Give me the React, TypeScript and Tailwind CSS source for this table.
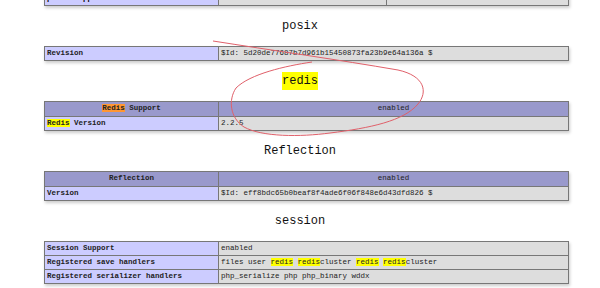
import React from "react";

const mono = "font-['Liberation_Mono','DejaVu_Sans_Mono',monospace]";

function Hl({ children, orange = false }: { children: React.ReactNode; orange?: boolean }) {
  return <span className={orange ? "bg-[#ff9632]" : "bg-[#ffff00]"}>{children}</span>;
}

function Heading({ children }: { children: React.ReactNode }) {
  return (
    <div className={`h-[40px] flex items-center justify-center text-[12px] text-[#111] ${mono}`}>
      {children}
    </div>
  );
}

type Row = { e: React.ReactNode; v: React.ReactNode; header?: boolean };

function InfoTable({ rows }: { rows: Row[] }) {
  return (
    <table className={`ml-[44px] w-[525px] border-collapse shadow-[1px_2px_3px_#ccc] text-[7.5px] text-[#222] ${mono}`}>
      <tbody>
        {rows.map((r, i) =>
          r.header ? (
            <tr key={i} className="h-[15px] bg-[#9999cc]">
              <th className="w-[174px] border border-[#777] font-bold text-center leading-none">{r.e}</th>
              <th className="border border-[#777] font-normal text-center leading-none">{r.v}</th>
            </tr>
          ) : (
            <tr key={i} className="h-[14px]">
              <td className="w-[174px] border border-[#777] bg-[#ccccff] font-bold px-[2px] leading-none">{r.e}</td>
              <td className="border border-[#777] bg-[#dddddd] px-[2px] leading-none">{r.v}</td>
            </tr>
          )
        )}
      </tbody>
    </table>
  );
}

function Annotation() {
  return (
    <svg className="absolute left-0 top-0 pointer-events-none" width="600" height="288" viewBox="0 0 600 288">
      <path
        d="M213 41 C 270 50, 340 60, 398 70 C 425 76, 428 92, 418 104 C 404 121, 370 128, 330 133 C 300 137, 262 137, 244 127 C 230 118, 228 100, 236 88 C 250 74, 285 66, 312 62"
        fill="none"
        stroke="#e0606a"
        strokeWidth="1"
      />
    </svg>
  );
}

export default function App() {
  return (
    <div className="relative w-[600px] h-[288px] overflow-hidden bg-white">
      <table className={`ml-[44px] mt-[-9px] w-[525px] border-collapse shadow-[1px_2px_3px_#ccc] text-[7.5px] ${mono}`}>
        <tbody>
          <tr className="h-[14px]">
            <td className="w-[174px] border border-[#777] bg-[#ccccff] font-bold px-[2px] leading-none">pcntl support</td>
            <td className="w-[168px] border border-[#777] bg-[#dddddd]"></td>
            <td className="border border-[#777] bg-[#dddddd]"></td>
          </tr>
        </tbody>
      </table>

      <Heading>posix</Heading>
      <InfoTable rows={[{ e: "Revision", v: "$Id: 5d20de77687b7d961b15450873fa23b9e64a136a $" }]} />

      <Heading>
        <Hl>redis</Hl>
      </Heading>
      <InfoTable
        rows={[
          { header: true, e: <><Hl orange>Redis</Hl> Support</>, v: "enabled" },
          { e: <><Hl>Redis</Hl> Version</>, v: "2.2.5" },
        ]}
      />

      <Heading>Reflection</Heading>
      <InfoTable
        rows={[
          { header: true, e: "Reflection", v: "enabled" },
          { e: "Version", v: "$Id: eff8bdc65b0beaf8f4ade6f06f848e6d43dfd826 $" },
        ]}
      />

      <Heading>session</Heading>
      <InfoTable
        rows={[
          { e: "Session Support", v: "enabled" },
          {
            e: "Registered save handlers",
            v: (
              <>
                files user <Hl>redis</Hl> <Hl>redis</Hl>cluster <Hl>redis</Hl> <Hl>redis</Hl>cluster
              </>
            ),
          },
          { e: "Registered serializer handlers", v: "php_serialize php php_binary wddx" },
        ]}
      />

      <Annotation />
    </div>
  );
}
